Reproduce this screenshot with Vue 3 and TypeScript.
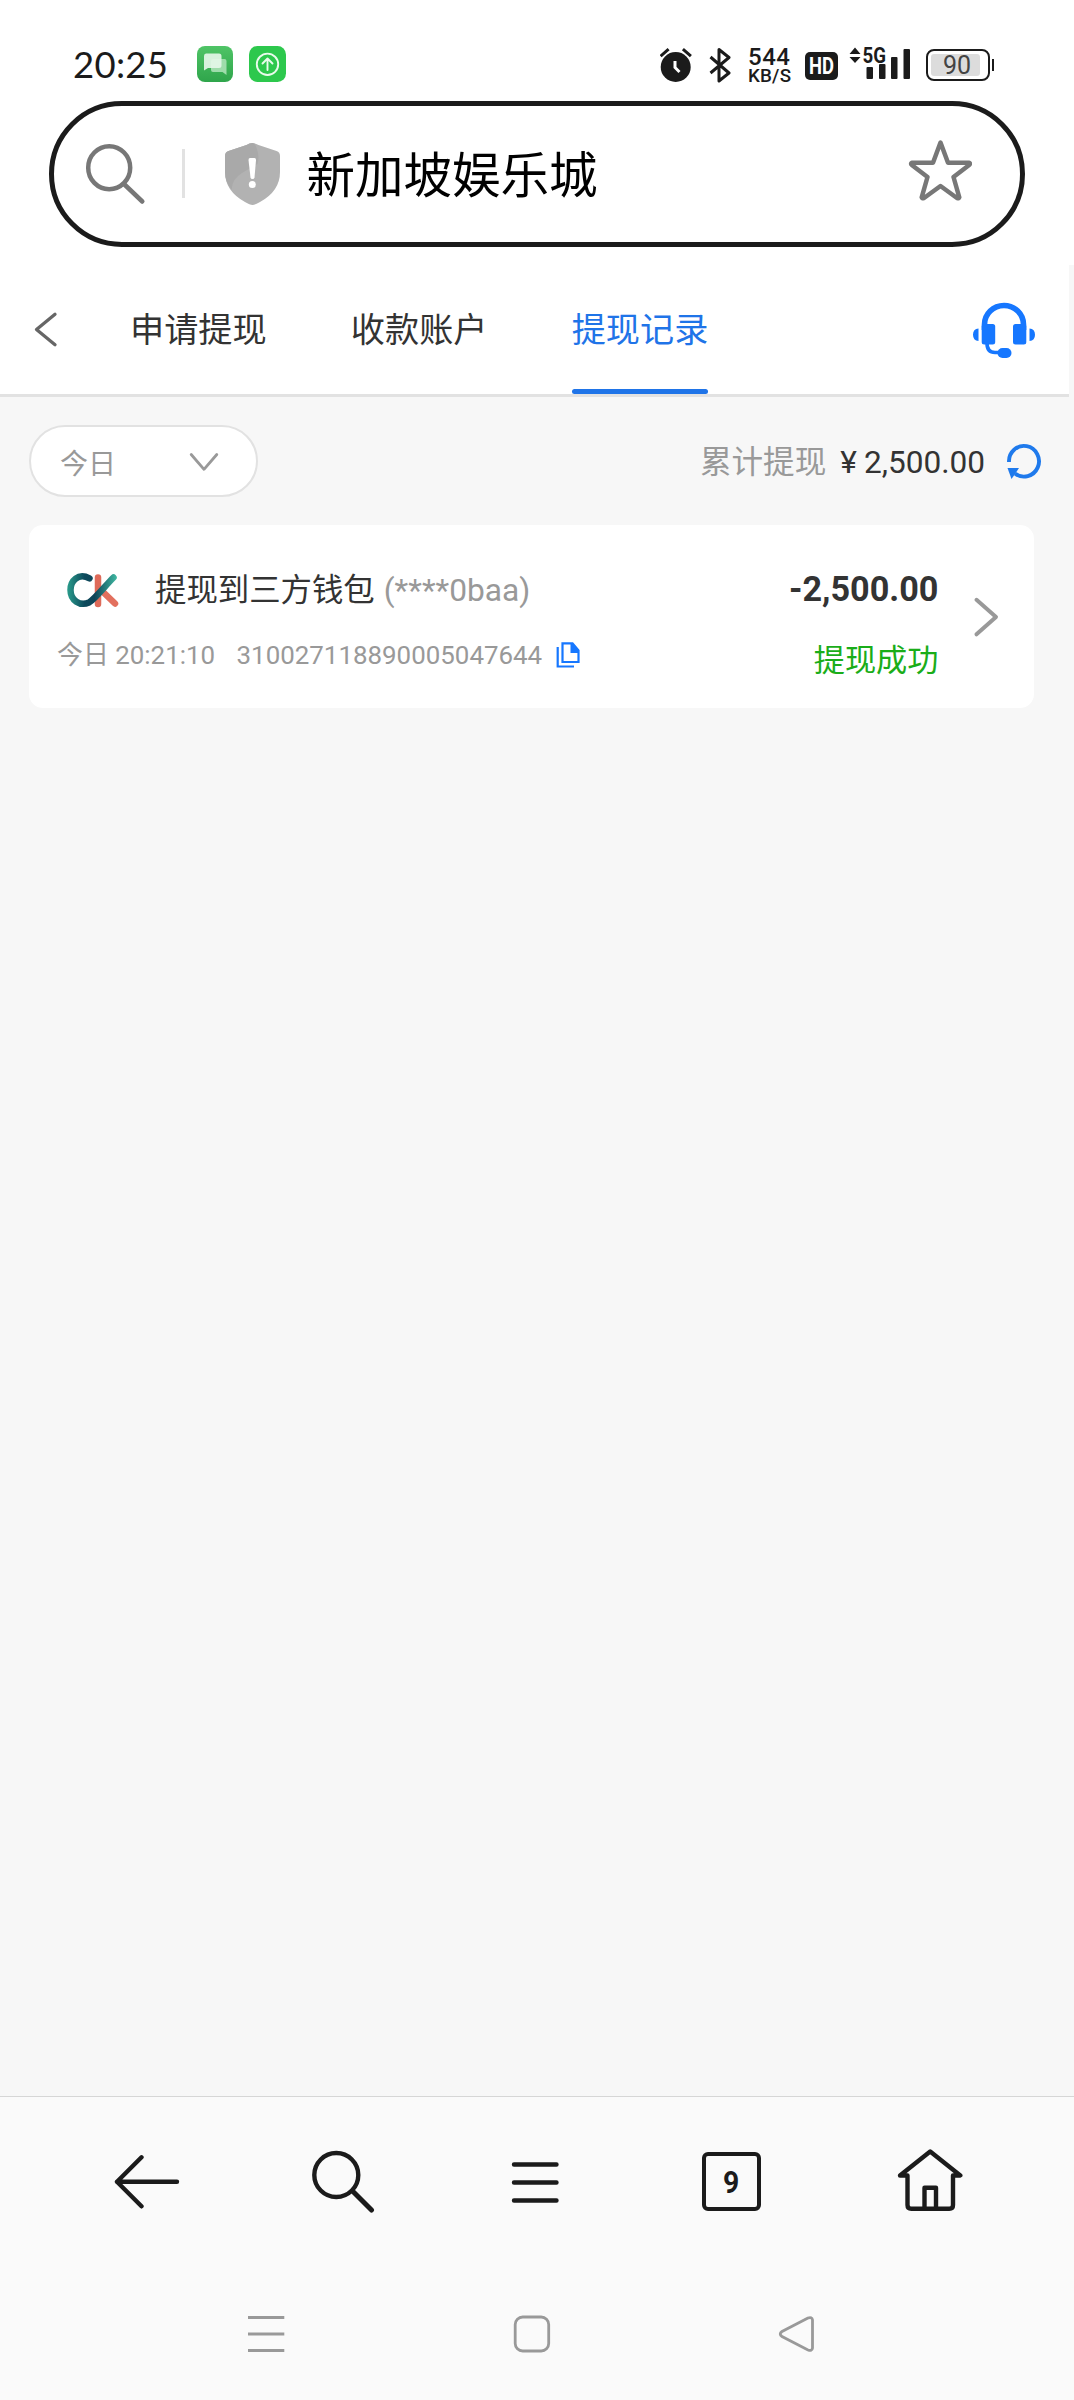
<script setup lang="ts">
import { ref } from 'vue'

interface Tab { id: string; label: string }
interface WithdrawRecord {
  title: string
  account: string
  time: string
  order: string
  amount: string
  status: string
}

const tabs: Tab[] = [
  { id: 'apply', label: '申请提现' },
  { id: 'accounts', label: '收款账户' },
  { id: 'records', label: '提现记录' },
]
const activeTab = ref('records')
const records: WithdrawRecord[] = [
  {
    title: '提现到三方钱包',
    account: '(****0baa)',
    time: '今日 20:21:10',
    order: '310027118890005047644',
    amount: '-2,500.00',
    status: '提现成功',
  },
]
</script>

<template>
  <div class="screen">
    <div class="chrome">
      <div class="status">
        <span class="clock">20:25</span>
        <svg class="app-chat" width="36" height="36" viewBox="0 0 36 36">
          <defs>
            <linearGradient id="chatBg" x1="0" y1="0" x2="0" y2="1">
              <stop offset="0" stop-color="#4fc466" /><stop offset="1" stop-color="#2fa54b" />
            </linearGradient>
          </defs>
          <rect width="36" height="36" rx="8" fill="url(#chatBg)" />
          <path d="M16 13h11.500q2 0 2 2v14l-4-3H16q-2 0-2-2V15q0-2 2-2z" fill="#9fdcab" />
          <path d="M9 7.500h13q2.500 0 2.500 2.500v9.500q0 2.500-2.500 2.500H11l-4 2.500V10q0-2.500 2-2.500z" fill="#e4f6e8" fill-opacity=".92" />
        </svg>
        <svg class="app-up" width="37" height="36" viewBox="0 0 37 36">
          <rect width="37" height="36" rx="8.500" fill="#2dc84d" />
          <g fill="none" stroke="#e9fbec" stroke-width="1.900" stroke-linecap="round" stroke-linejoin="round">
            <circle cx="18.500" cy="18.300" r="10.700" /><path d="M18.500 24V12.500M13.500 17.500l5-5 5 5" />
          </g>
        </svg>
        <svg class="alarm" width="32" height="36" viewBox="660 47 32 36">
          <circle cx="675.700" cy="67" r="15" fill="#1b1b1b" />
          <path d="M660.600 56.200l8-7M690.900 56.200l-8-7" stroke="#1b1b1b" stroke-width="3" />
          <path d="M675 61v6.500l4.500 4.500" fill="none" stroke="#fff" stroke-width="3" />
        </svg>
        <svg class="bt" width="22" height="36" viewBox="709 47 22 36">
          <path d="M710.500 57l18.500 16-10 8V49.500l10 8-18.500 15.500" fill="none" stroke="#1b1b1b" stroke-width="3" stroke-linejoin="round" />
        </svg>
        <div class="speed"><b>544</b><span>KB/S</span></div>
        <div class="hd"><span>HD</span></div>
        <svg class="signal" width="62" height="40" viewBox="849 42 62 40">
          <path d="M849.500 54l5.500-6.500 5.500 6.500zM849.500 57h11l-5.500 6z" fill="#1b1b1b" />
          <g fill="#1b1b1b">
            <rect x="866.500" y="67" width="6.500" height="12" rx="1" /><rect x="879" y="64" width="6.500" height="15" rx="1" />
            <rect x="891" y="57" width="6.500" height="22" rx="1" /><rect x="903.500" y="49" width="6.500" height="30" rx="1" />
          </g>
          <text x="862.500" y="62.500" textLength="23.500" lengthAdjust="spacingAndGlyphs" class="net">5G</text>
        </svg>
        <div class="battery"><span>90</span></div>
      </div>

      <div class="search">
        <svg class="s-glass" width="62" height="64" viewBox="84 142 62 64">
          <g fill="none" stroke="#777" stroke-width="4.500" stroke-linecap="round">
            <ellipse cx="109.200" cy="167.700" rx="21" ry="21.500" /><path d="M124.500 184.500L142.300 201.500" />
          </g>
        </svg>
        <i class="s-div"></i>
        <svg class="s-shield" width="55" height="62" viewBox="0 0 55 62">
          <path d="M27.500 0q3 0 6 2l18 6q3.500 1.200 3.500 5v16q0 19-20 30-5 3-7.500 3t-7.500-3Q0 48 0 29V13q0-3.800 3.500-5l18-6q3-2 6-2z" fill="#b2b2b2" />
          <path d="M27.500 0q3 0 5 8 2 7 0 13L17 30Q6 37 7 47 0 39 0 29V13q0-3.800 3.500-5l18-6q3-2 6-2z" fill="#a9a9a9" />
          <path d="M23.500 17q0-2 1.500-2h4.500q1.500 0 1.500 2l-1.500 17.500q-.3 1.500-2 1.500t-2-1.500z" fill="#fff" />
          <circle cx="27.300" cy="41.500" r="3.500" fill="#fff" />
        </svg>
        <span class="s-text">新加坡娱乐城</span>
        <svg class="s-star" width="64" height="64" viewBox="908 138 64 64">
          <path d="M940.500 142.500l7.500 20.300h21.200q1.500.7 0 2.200L953.500 177 959.300 197.300q-.3 1.400-2 .9L940.500 186l-16.800 12.200q-1.700.5-2-.9L927.500 177 911.800 165q-1.500-1.500 0-2.200H933z" fill="none" stroke="#777" stroke-width="4.500" stroke-linejoin="round" />
        </svg>
      </div>
    </div>

    <header class="head">
      <svg class="back" width="24" height="40" viewBox="34 309 24 40">
        <path d="M55 314.300L36.500 329.500 55 344.800" fill="none" stroke="#666" stroke-width="3.300" stroke-linecap="round" stroke-linejoin="round" />
      </svg>
      <nav class="tabs">
        <a v-for="t in tabs" :key="t.id" :class="{ on: t.id === activeTab }" @click="activeTab = t.id">{{ t.label }}</a>
      </nav>
      <svg class="service" width="64" height="58" viewBox="972 301 64 58">
        <g fill="#1677ff">
          <rect x="981.700" y="324" width="13.500" height="20.500" rx="2.500" /><rect x="1013" y="324" width="13.300" height="20.500" rx="2.500" />
          <path d="M978.500 328.500v12.500q-5.500-.5-5.500-6.300t5.500-6.200zM1029.500 328.500v12.500q5.500-.5 5.500-6.300t-5.500-6.200z" />
          <rect x="997.500" y="348" width="14" height="10" rx="5" />
        </g>
        <path d="M984.500 330v-5.500a19.500 19 0 0 1 39 0v5.500" fill="none" stroke="#1677ff" stroke-width="5.600" />
        <path d="M987 343q0 9.500 8 9.500h5" fill="none" stroke="#1677ff" stroke-width="3.600" />
      </svg>
    </header>

    <div class="filter">
      <button class="pill"><span>今日</span>
        <svg width="30" height="20" viewBox="189 451 30 20"><path d="M191.200 453.500L204 468.300l12.800-14.800" fill="none" stroke="#999" stroke-width="2.800" stroke-linecap="round" stroke-linejoin="round" /></svg>
      </button>
      <div class="total">
        <span class="label">累计提现</span><span class="yen">¥</span><span class="sum">2,500.00</span>
        <svg width="36" height="38" viewBox="1006 442 36 38">
          <path d="M1009 462a15 15.300 0 1 1 6 11.500" fill="none" stroke="#1f7aec" stroke-width="3.900" />
          <path d="M1007.500 468h11.500l-3.300 5-4.200 6z" fill="#1f7aec" />
        </svg>
      </div>
    </div>

    <div v-for="r in records" :key="r.order" class="card">
      <div class="info">
        <div class="line1">
          <svg class="logo" width="52" height="36" viewBox="66 573 52 36">
            <defs>
              <linearGradient id="arc" x1="66" y1="0" x2="116" y2="0" gradientUnits="userSpaceOnUse">
                <stop offset="0" stop-color="#2a9d8c" /><stop offset=".35" stop-color="#0d4a5c" />
                <stop offset=".55" stop-color="#0e4458" /><stop offset="1" stop-color="#3fb9a2" />
              </linearGradient>
            </defs>
            <g fill="none" stroke-width="6.500" stroke-linecap="round">
              <path d="M97 577.500v26.500" stroke="#de6a59" /><path d="M101 591l13 12.500" stroke="#e2705e" />
              <path d="M88.500 578.300C77 572.500 69.500 581 69.500 590c0 10.500 9.500 16.500 18.500 12.500C94 599 104 586 112.500 577.500" stroke="url(#arc)" />
            </g>
          </svg>
          <span class="title">{{ r.title }}</span><span class="acct">{{ r.account }}</span>
        </div>
        <div class="line2">
          <span class="time">{{ r.time }}</span><span class="order">{{ r.order }}</span>
          <svg class="copy" width="24" height="26" viewBox="557 642 24 26">
            <path d="M563.500 643.300H573.500l6 7.200v11.500h-16z" fill="none" stroke="#1677ff" stroke-width="2.200" />
            <path d="M571.500 643h2l6.500 7.500v2.500h-8.500z" fill="#1677ff" />
            <path d="M558.700 647v19.500H575" fill="none" stroke="#1677ff" stroke-width="2.200" />
          </svg>
        </div>
      </div>
      <div class="money"><b>{{ r.amount }}</b><span>{{ r.status }}</span></div>
      <svg class="go" width="26" height="42" viewBox="973 596 26 42">
        <path d="M976.500 599.800L996 617l-19.500 17.300" fill="none" stroke="#999" stroke-width="4" stroke-linecap="round" stroke-linejoin="round" />
      </svg>
    </div>

    <footer class="bottom">
      <div class="toolbar">
        <svg width="66" height="56" viewBox="114 2154 66 56">
          <path d="M177 2181.800H117M141.500 2157.300l-24.500 24.500 24.500 24.500" />
        </svg>
        <svg class="find" width="64" height="64" viewBox="311 2149 64 64">
          <circle cx="336.300" cy="2175" r="22" /><path d="M353 2191.500l18.500 18.500" stroke-width="5" />
        </svg>
        <svg class="menu" width="48" height="42" viewBox="511 2161 48 42">
          <path d="M514 2164.500h42.500M514 2182.500h42.500M514 2200.500h42.500" />
        </svg>
        <div class="count"><span>9</span></div>
        <svg class="home" width="66" height="64" viewBox="897 2149 66 64">
          <path d="M907.500 2175.500H900L930.200 2151.500 960.300 2175.500H953V2205q0 3.700-3.700 3.700h-38q-3.800 0-3.800-3.700zM924.500 2208V2187.800h11.500V2208" />
        </svg>
      </div>
      <div class="sysnav">
        <svg width="38" height="38" viewBox="247 2314.500 38 38">
          <path d="M248 2317h36.300M248 2333.500h36.300M248 2350h36.300" />
        </svg>
        <svg width="38" height="38" viewBox="513 2314.500 38 38">
          <rect x="515.200" y="2316.500" width="33.500" height="34" rx="7.500" />
        </svg>
        <svg width="38" height="38" viewBox="778 2314.500 38 38">
          <path d="M808 2317.500L782 2331q-3.500 2.500 0 5l26 13.500q4 1.500 4.500-2v-28q-.5-3.500-4.500-2z" />
        </svg>
      </div>
    </footer>
  </div>
</template>

<style>
html, body { margin: 0; background: #f7f7f7; }
</style>

<style scoped>
.screen {
  width: 1074px;
  height: 2400px;
  display: flex;
  flex-direction: column;
  background: #f7f7f7;
  color: #333;
  font-family: Roboto, "Noto Sans CJK SC", sans-serif;
  box-sizing: border-box;
  overflow: hidden;
}
svg { flex: none; display: block; }
span, b, a { white-space: nowrap; }
.chrome { flex: none; height: 265px; background: #fff; }
.status {
  height: 101px;
  display: flex;
  align-items: flex-start;
  color: #1b1b1b;
}
.clock {
  width: 124px;
  margin: 41px 0 0 73px;
  font: 400 36.500px/46px Lato, sans-serif;
  letter-spacing: .3px;
}
.app-chat { margin-top: 46px; }
.app-up { margin: 46px 0 0 16px; }
.alarm { margin: 47px 0 0 374px; }
.bt { margin: 47px 0 0 17px; }
.speed {
  width: 57px;
  margin: 47px 0 0 17px;
  display: flex;
  flex-direction: column;
  font-family: Roboto, sans-serif;
}
.speed b { font-size: 24px; line-height: 20px; font-weight: 500; letter-spacing: .5px; }
.speed span { font-size: 18.800px; line-height: 18px; font-weight: 500; letter-spacing: .2px; }
.hd {
  width: 33px;
  height: 28px;
  margin-top: 52px;
  border-radius: 5px;
  background: #1b1b1b;
  color: #fff;
  display: flex;
  justify-content: center;
  font: 700 23px/29px Roboto, sans-serif;
}
.hd span { transform: scaleX(.8); }
.signal { margin: 42px 0 0 11px; }
.net { font: 700 21.500px Roboto, sans-serif; fill: #1b1b1b; }
.battery {
  position: relative;
  box-sizing: border-box;
  width: 64px;
  height: 32px;
  margin: 49px 0 0 15px;
  padding: 3px;
  border: 2px solid #1b1b1b;
  border-radius: 8px;
}
.battery::after {
  content: "";
  position: absolute;
  right: -6px;
  top: 8px;
  width: 2.5px;
  height: 12px;
  background: #1b1b1b;
}
.battery span {
  display: block;
  width: 49px;
  height: 22px;
  background: #dcdcdc;
  color: #444;
  text-align: center;
  border-radius: 3px;
  font: 400 25px/23px Roboto, sans-serif;
  text-indent: 3px;
}
.search {
  box-sizing: border-box;
  width: 976.500px;
  height: 145.500px;
  margin-left: 48.500px;
  border: 5px solid #1b1b1b;
  border-radius: 73px;
  background: #fff;
  display: flex;
  align-items: flex-start;
}
.s-glass { margin: 36px 0 0 30px; }
.s-div { width: 3px; height: 49px; margin: 43px 0 0 36px; background: #e2e2e2; }
.s-shield { margin: 37px 0 0 40px; }
.s-text {
  width: 601px;
  margin: 31px 0 0 27px;
  font: 400 48.5px/70px "Noto Sans CJK SC", sans-serif;
  color: #000;
}
.s-star { margin: 32px 0 0 0; }
.head {
  box-sizing: border-box;
  flex: none;
  width: 1069px;
  height: 132px;
  border-bottom: 3px solid #e2e2e2;
  background: #fff;
  display: flex;
  align-items: flex-start;
}
.back { margin: 44px 0 0 34px; }
.tabs { display: flex; gap: 84.300px; margin-left: 72px; width: 842px; }
.tabs a {
  box-sizing: border-box;
  height: 129px;
  padding-top: 40px;
  font-size: 34.150px;
  line-height: 50px;
  color: #333;
}
.tabs a.on {
  position: relative;
  color: #1f74e8;
}
.tabs a.on::after {
  content: "";
  position: absolute;
  left: 0;
  right: 0;
  bottom: 0;
  height: 5px;
  border-radius: 2.5px;
  background: #1f74e8;
}
.service { margin-top: 36px; }
.filter {
  flex: none;
  height: 128px;
  display: flex;
  align-items: center;
  justify-content: space-between;
  padding: 0 32px 0 29px;
}
.pill {
  box-sizing: border-box;
  width: 229px;
  height: 72px;
  border: 2.500px solid #e2e2e2;
  border-radius: 36px;
  background: #fff;
  color: #999;
  font: 400 28px/40px "Noto Sans CJK SC", sans-serif;
  display: flex;
  justify-content: space-between;
  align-items: center;
  padding: 1px 37px 0 29px;
}
.total { display: flex; align-items: center; font-size: 31.600px; line-height: 44px; }
.total span { padding-top: 3px; }
.label { color: #999; }
.yen { margin-left: 14px; }
.sum { margin-left: 7px; }
.total svg { margin-left: 21px; }
.card {
  box-sizing: border-box;
  flex: none;
  width: 1005px;
  height: 183px;
  margin-left: 28.500px;
  border-radius: 14px;
  background: #fff;
  display: flex;
  align-items: flex-start;
}
.info { width: 620px; flex: none; box-sizing: border-box; padding-left: 28.500px; }
.line1 { display: flex; align-items: center; height: 44px; margin-top: 44px; font-size: 31.400px; line-height: 44px; }
.logo { margin: 0 36.500px 0 9.500px; }
.acct { margin-left: 9px; color: #999; font-size: 31.700px; }
.line2 { display: flex; align-items: center; height: 36px; margin-top: 24px; font-size: 25.900px; line-height: 36px; color: #999; }
.order { margin-left: 21.500px; }
.copy { margin-left: 14px; }
.money { width: 290px; display: flex; flex-direction: column; align-items: flex-end; }
.money b { margin-top: 42px; font-size: 34.200px; line-height: 44px; font-weight: 700; }
.money span { margin-top: 28px; font-size: 31.200px; line-height: 44px; color: #1aad19; }
.go { margin: 71px 0 0 34px; }
.bottom {
  box-sizing: border-box;
  flex: none;
  height: 304px;
  margin-top: auto;
  border-top: 1px solid #d6d6d6;
  background: #fafafa;
}
.toolbar {
  height: 170px;
  display: flex;
  align-items: center;
  padding-left: 114px;
}
.toolbar svg { fill: none; stroke: #1b1b1b; stroke-width: 4.4; stroke-linecap: round; stroke-linejoin: round; }
.toolbar .find { margin: -2px 0 0 131px; }
.menu { margin-left: 136px; }
.count {
  box-sizing: border-box;
  width: 59px;
  height: 59px;
  margin: -1px 0 0 143px;
  border: 4px solid #1b1b1b;
  border-radius: 6px;
  color: #1b1b1b;
  display: flex;
  justify-content: center;
  font: 700 31.500px/53px Roboto, sans-serif;
}
.count span { transform: scaleX(.9); }
.toolbar .home { margin: -2px 0 0 136px; }
.sysnav {
  height: 133px;
  display: flex;
  align-items: center;
  justify-content: space-between;
  padding: 0 258px 0 247px;
}
.sysnav svg { fill: none; stroke: #999; stroke-width: 2.800; }
</style>
